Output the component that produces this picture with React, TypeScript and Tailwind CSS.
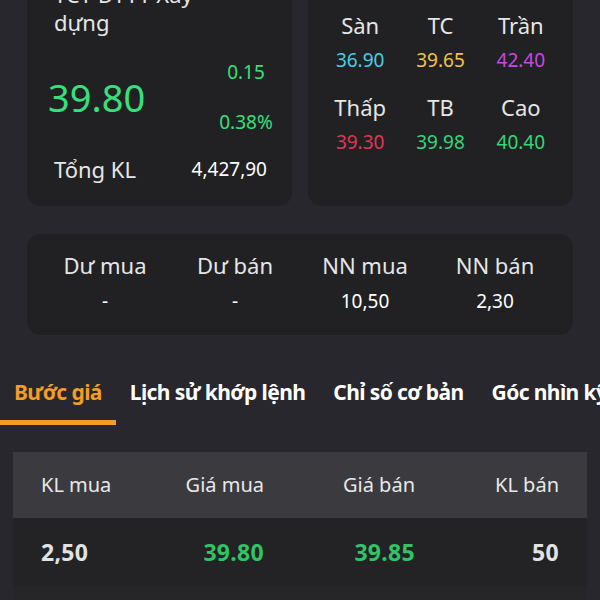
/*
  Stock quote detail (dark)
  - price summary cards, foreign trade stats, tab bar, order book
*/

export default function App() {
  const refPrices = [
    { label: "Sàn", value: "36.90", color: "text-[#45cfe3]" },
    { label: "TC", value: "39.65", color: "text-[#f2c14a]" },
    { label: "Trần", value: "42.40", color: "text-[#cb45e6]" },
    { label: "Thấp", value: "39.30", color: "text-[#e23655]" },
    { label: "TB", value: "39.98", color: "text-[#33d777]" },
    { label: "Cao", value: "40.40", color: "text-[#33d777]" },
  ];

  const trade = [
    { label: "Dư mua", value: "-" },
    { label: "Dư bán", value: "-" },
    { label: "NN mua", value: "10,50" },
    { label: "NN bán", value: "2,30" },
  ];

  const tabs = ["Bước giá", "Lịch sử khớp lệnh", "Chỉ số cơ bản", "Góc nhìn kỹ thuật"];

  return (
    <div
      className="h-[600px] w-[600px] overflow-hidden bg-[#28272d] text-[#ececec]"
      style={{ fontFamily: '"Noto Sans", sans-serif' }}
    >
      {/* Summary cards */}
      <div className="-mt-[40px] grid grid-cols-2 gap-[16px] px-[27px]">
        <div className="rounded-[14px] bg-[#212124] pt-[20px] pb-[23px]">
          <div className="max-w-[200px] pl-[27px] text-[22px] leading-[28px] text-[#e6e6e6]">
            TCT ĐTTT Xây dựng
          </div>

          <div className="mt-[24px] flex items-center justify-between pl-[21px] pr-[11px]">
            <span className="text-[38px] leading-[44px] text-[#36e07b]">39.80</span>
            <div className="flex w-[70px] flex-col items-center gap-[26px] text-[19px] leading-[24px] text-[#36e07b]">
              <span>0.15</span>
              <span>0.38%</span>
            </div>
          </div>

          <div className="mt-[21px] flex items-center justify-between pl-[27px] pr-[25px]">
            <span className="text-[22px] leading-[28px] text-[#e6e6e6]">Tổng KL</span>
            <span className="text-[19px] leading-[28px] text-white">4,427,90</span>
          </div>
        </div>

        <div className="rounded-[14px] bg-[#212124] px-[12px] pt-[50px]">
          <div className="grid grid-cols-3 gap-y-[19px]">
            {refPrices.map((p) => (
              <div key={p.label} className="flex flex-col items-center">
                <span className="text-[22px] leading-[30px] text-[#e6e6e6]">{p.label}</span>
                <span className={`mt-[7px] text-[19px] leading-[26px] ${p.color}`}>{p.value}</span>
              </div>
            ))}
          </div>
        </div>
      </div>

      {/* Foreign trade */}
      <div className="mx-[27px] mt-[28px] grid grid-cols-4 rounded-[14px] bg-[#212124] px-[13px] pt-[16px] pb-[21px]">
        {trade.map((t) => (
          <div key={t.label} className="flex flex-col items-center">
            <span className="text-[22px] leading-[30px] text-[#e6e6e6]">{t.label}</span>
            <span className="mt-[8px] text-[19px] leading-[26px] text-white">{t.value}</span>
          </div>
        ))}
      </div>

      {/* Tabs */}
      <div className="mt-[43px] flex whitespace-nowrap">
        {tabs.map((tab, i) => (
          <div
            key={tab}
            className={`shrink-0 border-b-[5px] px-[14px] pb-[14px] text-[21px] leading-[28px] font-bold tracking-[-0.6px] ${
              i === 0 ? "border-[#f39c26] text-[#f39c26]" : "border-transparent text-white"
            }`}
          >
            {tab}
          </div>
        ))}
      </div>

      {/* Order book */}
      <div className="mx-[13px] mt-[27px]">
        <div className="grid h-[66px] grid-cols-[143px_80px_151px_144px] items-center bg-[#3a3a3f] px-[28px] text-[20px] text-[#e8e8e8]">
          <span>KL mua</span>
          <span className="text-right">Giá mua</span>
          <span className="text-right">Giá bán</span>
          <span className="text-right">KL bán</span>
        </div>
        <div className="grid h-[68px] grid-cols-[143px_80px_151px_144px] items-center bg-[#232326] px-[28px] text-[23px] font-bold tracking-[0.3px]">
          <span className="text-[#e2e2e2]">2,50</span>
          <span className="text-right text-[#2fc465]">39.80</span>
          <span className="text-right text-[#2fc465]">39.85</span>
          <span className="text-right text-[#e2e2e2]">50</span>
        </div>
        <div className="h-[68px] bg-[#262629]" />
      </div>
    </div>
  );
}
